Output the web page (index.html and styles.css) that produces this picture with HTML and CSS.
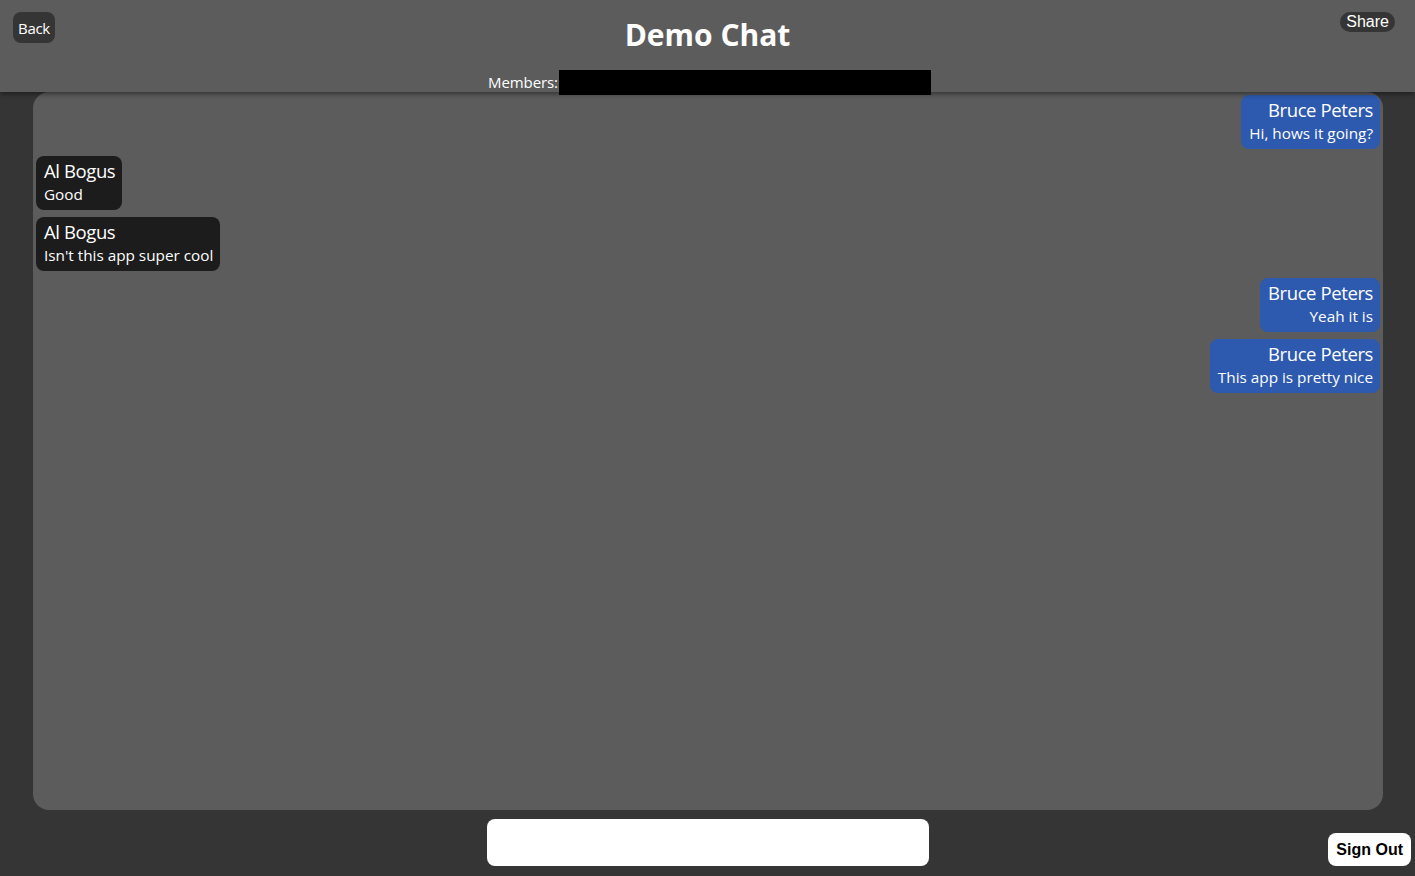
FILE: index.html
```html
<!DOCTYPE html>
<html>
<head>
<meta charset="utf-8">
<link rel="stylesheet" href="styles.css">
</head>
<body>
<header class="topbar">
  <button class="back-btn">Back</button>
  <div class="title-col">
    <h1 class="title">Demo Chat</h1>
    <div class="members"><span class="members-label">Members:</span><span class="members-box"></span></div>
  </div>
  <button class="share-btn">Share</button>
</header>
<main class="chat">
  <div class="msg mine"><div class="name">Bruce Peters</div><div class="text">Hi, hows it going?</div></div>
  <div class="msg theirs"><div class="name">Al Bogus</div><div class="text">Good</div></div>
  <div class="msg theirs"><div class="name">Al Bogus</div><div class="text">Isn't this app super cool</div></div>
  <div class="msg mine"><div class="name">Bruce Peters</div><div class="text">Yeah it is</div></div>
  <div class="msg mine"><div class="name">Bruce Peters</div><div class="text">This app is pretty nice</div></div>
</main>
<footer class="bottombar">
  <div></div>
  <input class="msg-input" type="text">
  <button class="signout-btn">Sign Out</button>
</footer>
</body>
</html>
```

FILE: styles.css
```css
html, body {
  margin: 0;
  padding: 0;
}
body {
  background: #353535;
  height: 876px;
  display: flex;
  flex-direction: column;
  font-family: "Open Sans", "Noto Sans", sans-serif;
  color: #fff;
  overflow: hidden;
}
.topbar {
  height: 92px;
  flex: none;
  background: #5c5c5c;
  box-shadow: 0 2px 5px rgba(0,0,0,0.45);
  position: relative;
  z-index: 2;
  display: grid;
  grid-template-columns: 1fr auto 1fr;
  align-items: start;
  box-sizing: border-box;
}
.back-btn {
  justify-self: start;
  margin: 12px 0 0 13px;
  height: 31px;
  padding: 0 5px;
  background: #353535;
  color: #fff;
  border: none;
  border-radius: 8px;
  font-family: "Open Sans", sans-serif;
  font-size: 15px;
  letter-spacing: -0.3px;
}
.share-btn {
  justify-self: end;
  margin: 12px 20px 0 0;
  height: 20px;
  padding: 0 6px;
  background: #353535;
  color: #fff;
  border: none;
  border-radius: 10px;
  font-family: "Liberation Sans", Arial, sans-serif;
  font-size: 16px;
  line-height: 20px;
}
.title-col {
  display: flex;
  flex-direction: column;
  align-items: center;
}
.title {
  margin: 15px 0 0 0;
  font-size: 30px;
  font-weight: 700;
  line-height: 40px;
}
.members {
  margin-top: 15px;
  display: flex;
  align-items: center;
  margin-left: 4px;
}
.members-label {
  font-size: 15px;
  letter-spacing: -0.1px;
  line-height: 25px;
}
.members-box {
  display: block;
  width: 372px;
  height: 25px;
  background: #000;
  margin-left: 1px;
}
.chat {
  flex: none;
  height: 718px;
  margin: 0 32px 0 33px;
  background: #5c5c5c;
  border-radius: 16px;
  padding: 3px 3px;
  box-sizing: border-box;
  display: flex;
  flex-direction: column;
  gap: 7px;
}
.msg {
  border-radius: 8px;
  padding: 3px 7px 5px 8px;
}
.mine {
  align-self: flex-end;
  background: #2d5aae;
  text-align: right;
}
.theirs {
  align-self: flex-start;
  background: #1c1c1c;
  text-align: left;
}
.name {
  font-size: 18.5px;
  line-height: 24px;
  letter-spacing: -0.4px;
}
.text {
  font-size: 15.3px;
  line-height: 22px;
}
.bottombar {
  flex: 1;
  display: grid;
  grid-template-columns: 1fr 442px 1fr;
  align-items: end;
  padding: 9px 0 10px 0;
}
.msg-input {
  height: 47px;
  box-sizing: border-box;
  border: none;
  border-radius: 8px;
  background: #fff;
  outline: none;
}
.signout-btn {
  justify-self: end;
  margin-right: 4px;
  height: 33px;
  padding: 0 8px;
  background: #fff;
  color: #000;
  border: none;
  border-radius: 8px;
  font-family: "Liberation Sans", Arial, sans-serif;
  font-weight: 700;
  font-size: 16px;
}
```
